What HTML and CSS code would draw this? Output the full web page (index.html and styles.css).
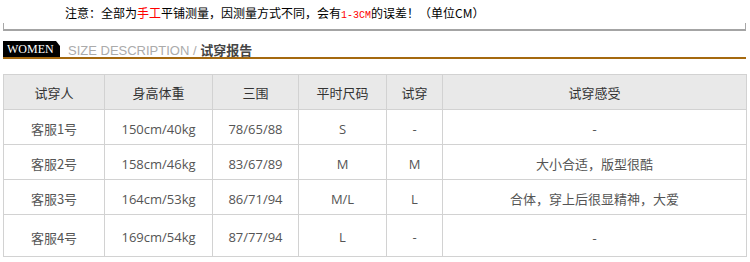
FILE: index.html
```html
<!DOCTYPE html>
<html lang="zh-CN">
<head>
<meta charset="utf-8">
<title>试穿报告</title>
<link rel="stylesheet" href="styles.css">
</head>
<body>
<div class="page">
  <div class="note">注意：全部为<span class="red">手工</span>平铺测量，因测量方式不同，会有<span class="red mono">1-3CM</span>的误差！（单位CM）</div>
  <div class="rule"></div>
  <div class="title">
    <div class="badge">WOMEN</div>
    <div class="title-text"><span class="en">SIZE DESCRIPTION / </span><span class="cn">试穿报告</span></div>
  </div>
  <table class="report">
    <colgroup>
      <col class="c1"><col class="c2"><col class="c3"><col class="c4"><col class="c5"><col class="c6">
    </colgroup>
    <thead>
      <tr><th>试穿人</th><th>身高体重</th><th>三围</th><th>平时尺码</th><th>试穿</th><th>试穿感受</th></tr>
    </thead>
    <tbody>
      <tr><td>客服1号</td><td>150cm/40kg</td><td>78/65/88</td><td>S</td><td>-</td><td>-</td></tr>
      <tr><td>客服2号</td><td>158cm/46kg</td><td>83/67/89</td><td>M</td><td>M</td><td>大小合适，版型很酷</td></tr>
      <tr><td>客服3号</td><td>164cm/53kg</td><td>86/71/94</td><td>M/L</td><td>L</td><td>合体，穿上后很显精神，大爱</td></tr>
      <tr class="last"><td>客服4号</td><td>169cm/54kg</td><td>87/77/94</td><td>L</td><td>-</td><td>-</td></tr>
    </tbody>
  </table>
</div>
</body>
</html>
```

FILE: styles.css
```css
html, body {
  margin: 0;
  padding: 0;
  background: #fff;
}

.page {
  width: 743px;
  margin-left: 3px;
}

.note {
  height: 18px;
  padding: 5px 0 0 62px;
  font: 12px/16px "Noto Sans CJK SC", sans-serif;
  color: #000;
  white-space: nowrap;
}

.red {
  color: #f00;
}

.mono {
  font-family: "Liberation Mono", monospace;
  font-size: 10px;
}

.rule {
  height: 6px;
  border-left: 1px solid #a8a8a8;
  border-right: 1px solid #a8a8a8;
  border-bottom: 2px solid #a4a4a4;
}

.title {
  display: flex;
  align-items: flex-end;
  margin-top: 10px;
  border-bottom: 2px solid #a5690f;
}

.badge {
  width: 53px;
  height: 16px;
  padding-left: 4px;
  background: #000;
  color: #fff;
  font: 12px/17px "Liberation Serif", serif;
  clip-path: polygon(0 0, calc(100% - 4px) 0, 100% 5px, 100% 100%, 0 100%);
}

.title-text {
  margin-left: 8px;
  line-height: 13px;
  white-space: nowrap;
}

.title-text .en {
  font: 13px/13px "Liberation Sans", sans-serif;
  color: #ababab;
}

.title-text .cn {
  font: bold 13px/13px "Noto Sans CJK SC", sans-serif;
  color: #444;
}

.report {
  margin-top: 15px;
  width: 743px;
  table-layout: fixed;
  border-collapse: collapse;
  font-family: "Open Sans", "Noto Sans CJK SC", sans-serif;
  font-size: 13px;
}

.c1 { width: 101px; }
.c2 { width: 108px; }
.c3 { width: 86px; }
.c4 { width: 88px; }
.c5 { width: 56px; }
.c6 { width: 304px; }

.report th,
.report td {
  border: 1px solid #d2d2d2;
  padding: 0;
  text-align: center;
  vertical-align: middle;
}

.report th {
  height: 34px;
  background: #e9e9e9;
  color: #333;
  font-weight: normal;
  font-family: "Noto Sans CJK SC", sans-serif;
}

.report td {
  height: 35px;
  padding-top: 3px;
  box-sizing: border-box;
  color: #555;
}

.report td:first-child {
  font-family: "Noto Sans CJK SC", sans-serif;
}

.report td:last-child {
  font-family: "Noto Sans CJK SC", sans-serif;
}

.report tr.last td {
  height: 42px;
}
```
